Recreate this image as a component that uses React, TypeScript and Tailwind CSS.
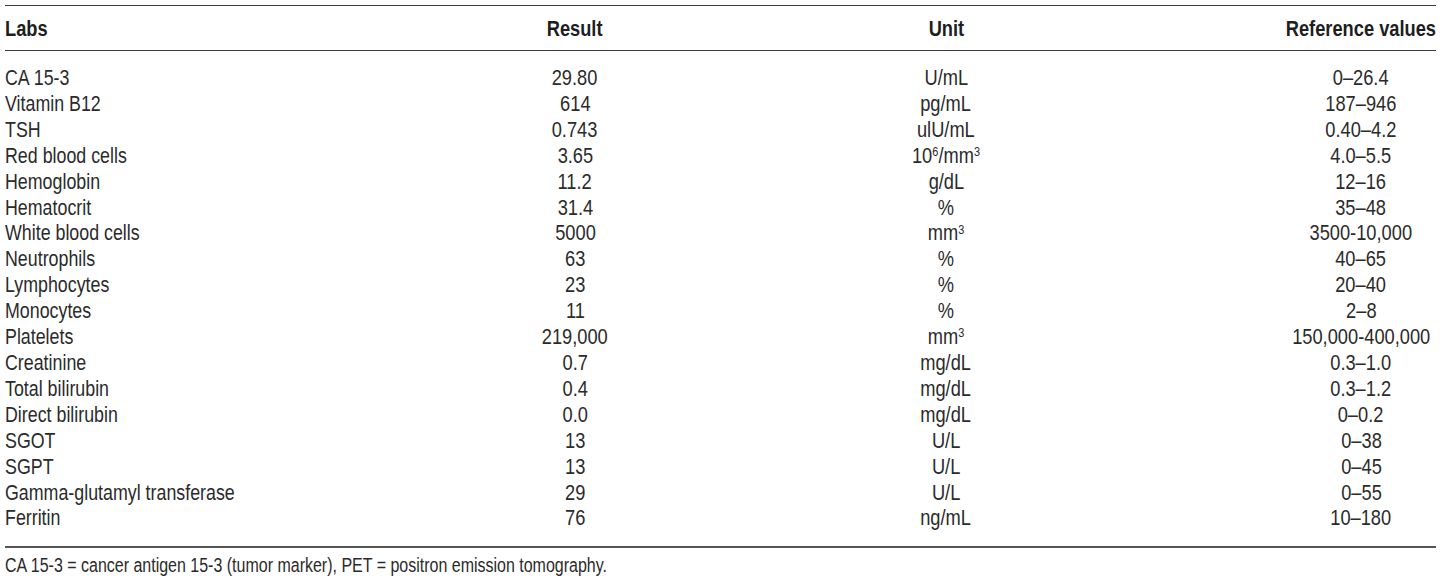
import type { ReactNode } from 'react';

type Row = { lab: string; result: string; unit: ReactNode; ref: string };

const rows: Row[] = [
  { lab: 'CA 15-3', result: '29.80', unit: 'U/mL', ref: '0–26.4' },
  { lab: 'Vitamin B12', result: '614', unit: 'pg/mL', ref: '187–946' },
  { lab: 'TSH', result: '0.743', unit: 'ulU/mL', ref: '0.40–4.2' },
  {
    lab: 'Red blood cells',
    result: '3.65',
    unit: (
      <>
        10<sup className="text-[0.6em]">6</sup>/mm<sup className="text-[0.6em]">3</sup>
      </>
    ),
    ref: '4.0–5.5',
  },
  { lab: 'Hemoglobin', result: '11.2', unit: 'g/dL', ref: '12–16' },
  { lab: 'Hematocrit', result: '31.4', unit: '%', ref: '35–48' },
  {
    lab: 'White blood cells',
    result: '5000',
    unit: (
      <>
        mm<sup className="text-[0.6em]">3</sup>
      </>
    ),
    ref: '3500-10,000',
  },
  { lab: 'Neutrophils', result: '63', unit: '%', ref: '40–65' },
  { lab: 'Lymphocytes', result: '23', unit: '%', ref: '20–40' },
  { lab: 'Monocytes', result: '11', unit: '%', ref: '2–8' },
  {
    lab: 'Platelets',
    result: '219,000',
    unit: (
      <>
        mm<sup className="text-[0.6em]">3</sup>
      </>
    ),
    ref: '150,000-400,000',
  },
  { lab: 'Creatinine', result: '0.7', unit: 'mg/dL', ref: '0.3–1.0' },
  { lab: 'Total bilirubin', result: '0.4', unit: 'mg/dL', ref: '0.3–1.2' },
  { lab: 'Direct bilirubin', result: '0.0', unit: 'mg/dL', ref: '0–0.2' },
  { lab: 'SGOT', result: '13', unit: 'U/L', ref: '0–38' },
  { lab: 'SGPT', result: '13', unit: 'U/L', ref: '0–45' },
  { lab: 'Gamma-glutamyl transferase', result: '29', unit: 'U/L', ref: '0–55' },
  { lab: 'Ferritin', result: '76', unit: 'ng/mL', ref: '10–180' },
];

const cols = 'grid grid-cols-[445px_250px_492px_244px]';

// no narrow font installed, so squeeze the text horizontally
const narrowL = 'inline-block whitespace-nowrap origin-left scale-x-[0.81]';
const narrowC = 'inline-block whitespace-nowrap origin-center scale-x-[0.83]';
const headL = 'inline-block whitespace-nowrap origin-left scale-x-[0.83]';
const headC = 'inline-block whitespace-nowrap origin-center scale-x-[0.83]';
const headR = 'inline-block whitespace-nowrap origin-right scale-x-[0.83]';

export default function App() {
  return (
    <div className="min-h-[579px] w-full bg-white pl-[5px] pt-[5px] font-['Liberation_Sans',Arial,sans-serif] text-[#2b2b2b]">
      <div className="w-[1431px]">
        {/* Header */}
        <div className={`${cols} border-y-[1.5px] border-[#3c3c3c] pb-[8px] pt-[10px] text-[22px] font-bold leading-[26px] text-[#1e1e1e]`}>
          <div>
            <span className={headL}>Labs</span>
          </div>
          <div className="text-center">
            <span className={headC}>Result</span>
          </div>
          <div className="text-center">
            <span className={headC}>Unit</span>
          </div>
          <div className="text-right">
            <span className={headR}>Reference values</span>
          </div>
        </div>

        {/* Rows */}
        <div className="border-b-2 border-[#555] pb-[15px] pt-[14px] text-[22px] leading-[25.9px]">
          {rows.map((r) => (
            <div key={r.lab} className={cols}>
              <div>
                <span className={narrowL}>{r.lab}</span>
              </div>
              <div className="flex justify-center">
                <span className={narrowC}>{r.result}</span>
              </div>
              <div className="flex justify-center">
                <span className={narrowC}>{r.unit}</span>
              </div>
              <div className="flex justify-center pl-[94px]">
                <span className={narrowC}>{r.ref}</span>
              </div>
            </div>
          ))}
        </div>

        {/* Footnote */}
        <p className="pt-[6px] text-[19.5px] leading-[22px]">
          <span className="inline-block whitespace-nowrap origin-left scale-x-[0.82]">
            CA 15-3 = cancer antigen 15-3 (tumor marker), PET = positron emission tomography.
          </span>
        </p>
      </div>
    </div>
  );
}
